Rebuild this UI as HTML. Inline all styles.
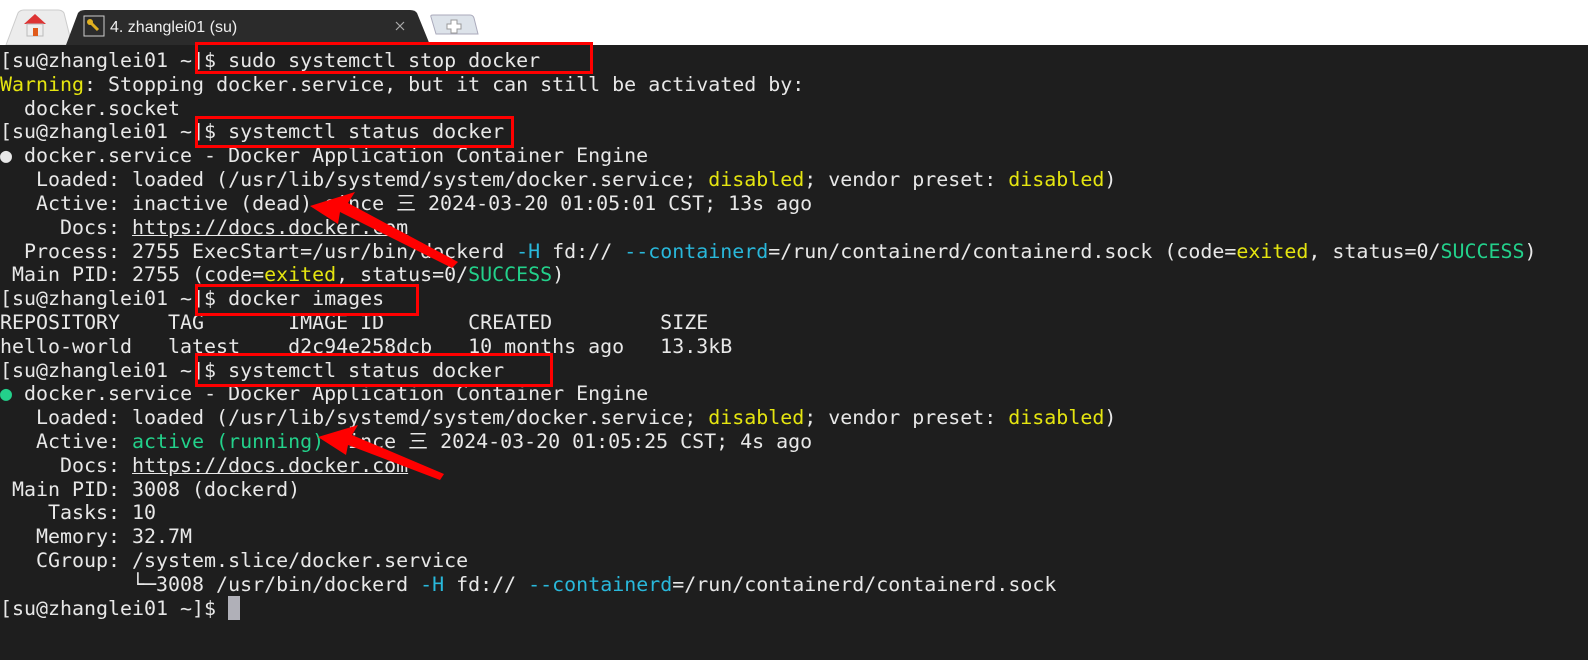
<!DOCTYPE html>
<html><head><meta charset="utf-8"><style>
body{margin:0;width:1588px;height:660px;background:#1e1e1e;overflow:hidden;position:relative;font-family:"DejaVu Sans Mono","Liberation Mono",monospace}
.tabbar{position:absolute;left:0;top:0;width:1588px;height:45px;background:#fff}
.l{position:absolute;left:0;margin:0;font-family:"DejaVu Sans Mono","Noto Sans CJK SC",monospace;font-size:19.95px;line-height:24px;height:24px;color:#e8e8e8;white-space:pre}
.y{color:#e5e510}.g{color:#23d18b}.c{color:#29b8db}.u{text-decoration:underline}
.box{position:absolute;border:3px solid #f00;box-sizing:border-box}
</style></head><body>
<div class="tabbar">
<svg width="500" height="45" style="position:absolute;left:0;top:0">
<path d="M6 45 L18 13 Q20 10 24 10 L58 10 Q62 10 64 13 L72 45 Z" fill="#ececec" stroke="#ccc"/>
<path d="M24 24 L35 14 L46 24 Z" fill="#d33"/>
<rect x="27" y="24" width="16" height="12" fill="#eee" stroke="#bbb"/>
<rect x="33" y="28" width="5" height="8" fill="#e05a1a"/>
<path d="M66 45 L78 13 Q80 10 85 10 L410 10 Q415 10 417 13 L430 45 Z" fill="#2b2b2b"/>
<rect x="84" y="16" width="20" height="20" fill="none" stroke="#ccc"/>
<path d="M90 22 L98 30" stroke="#e0b020" stroke-width="3"/><circle cx="90" cy="22" r="3" fill="#e0b020"/>
<text x="110" y="32" font-family="Liberation Sans" font-size="16" fill="#eee">4. zhanglei01 (su)</text>
<path d="M396 22 L404 30 M404 22 L396 30" stroke="#aaa" stroke-width="1.2"/>
<path d="M436 34 L431 17 Q430 15 433 15 L470 15 Q473 15 474 18 L478 34 Z" fill="#dde3ea" stroke="#aab"/>
<path d="M451 20 h6 v4 h4 v5 h-4 v4 h-6 v-4 h-4 v-5 h4 z" fill="#fff" stroke="#999"/>
</svg>
</div>
<div class="l" style="top:48px">[su@zhanglei01 ~]$ sudo systemctl stop docker</div>
<div class="l" style="top:72px"><span class="y">Warning</span>: Stopping docker.service, but it can still be activated by:</div>
<div class="l" style="top:96px">  docker.socket</div>
<div class="l" style="top:119px">[su@zhanglei01 ~]$ systemctl status docker</div>
<div class="l" style="top:143px">● docker.service - Docker Application Container Engine</div>
<div class="l" style="top:167px">   Loaded: loaded (/usr/lib/systemd/system/docker.service; <span class="y">disabled</span>; vendor preset: <span class="y">disabled</span>)</div>
<div class="l" style="top:191px">   Active: inactive (dead) since 三 2024-03-20 01:05:01 CST; 13s ago</div>
<div class="l" style="top:215px">     Docs: <span class="u">https://docs.docker.com</span></div>
<div class="l" style="top:239px">  Process: 2755 ExecStart=/usr/bin/dockerd <span class="c">-H</span> fd:// <span class="c">--containerd</span>=/run/containerd/containerd.sock (code=<span class="y">exited</span>, status=0/<span class="g">SUCCESS</span>)</div>
<div class="l" style="top:262px"> Main PID: 2755 (code=<span class="y">exited</span>, status=0/<span class="g">SUCCESS</span>)</div>
<div class="l" style="top:286px">[su@zhanglei01 ~]$ docker images</div>
<div class="l" style="top:310px">REPOSITORY    TAG       IMAGE ID       CREATED         SIZE</div>
<div class="l" style="top:334px">hello-world   latest    d2c94e258dcb   10 months ago   13.3kB</div>
<div class="l" style="top:358px">[su@zhanglei01 ~]$ systemctl status docker</div>
<div class="l" style="top:381px"><span class="g">●</span> docker.service - Docker Application Container Engine</div>
<div class="l" style="top:405px">   Loaded: loaded (/usr/lib/systemd/system/docker.service; <span class="y">disabled</span>; vendor preset: <span class="y">disabled</span>)</div>
<div class="l" style="top:429px">   Active: <span class="g">active (running)</span> since 三 2024-03-20 01:05:25 CST; 4s ago</div>
<div class="l" style="top:453px">     Docs: <span class="u">https://docs.docker.com</span></div>
<div class="l" style="top:477px"> Main PID: 3008 (dockerd)</div>
<div class="l" style="top:500px">    Tasks: 10</div>
<div class="l" style="top:524px">   Memory: 32.7M</div>
<div class="l" style="top:548px">   CGroup: /system.slice/docker.service</div>
<div class="l" style="top:572px">           └─3008 /usr/bin/dockerd <span class="c">-H</span> fd:// <span class="c">--containerd</span>=/run/containerd/containerd.sock</div>
<div class="l" style="top:596px">[su@zhanglei01 ~]$ <span style="background:#b0b0b8">&nbsp;</span></div>
<div class="box" style="left:195px;top:42px;width:398px;height:32px"></div>
<div class="box" style="left:195px;top:116px;width:319px;height:32px"></div>
<div class="box" style="left:195px;top:284px;width:224px;height:32px"></div>
<div class="box" style="left:195px;top:353px;width:358px;height:34px"></div>
<svg width="1588" height="660" style="position:absolute;left:0;top:0">
<path d="M310 206 L355 192 L348 203 L458 262 L452 268 L340 212 L338 224 Z" fill="#f00"/>
<path d="M318 437 L358 425 L352 435 L444 474 L440 480 L348 445 L346 455 Z" fill="#f00"/>
</svg>
</body></html>
